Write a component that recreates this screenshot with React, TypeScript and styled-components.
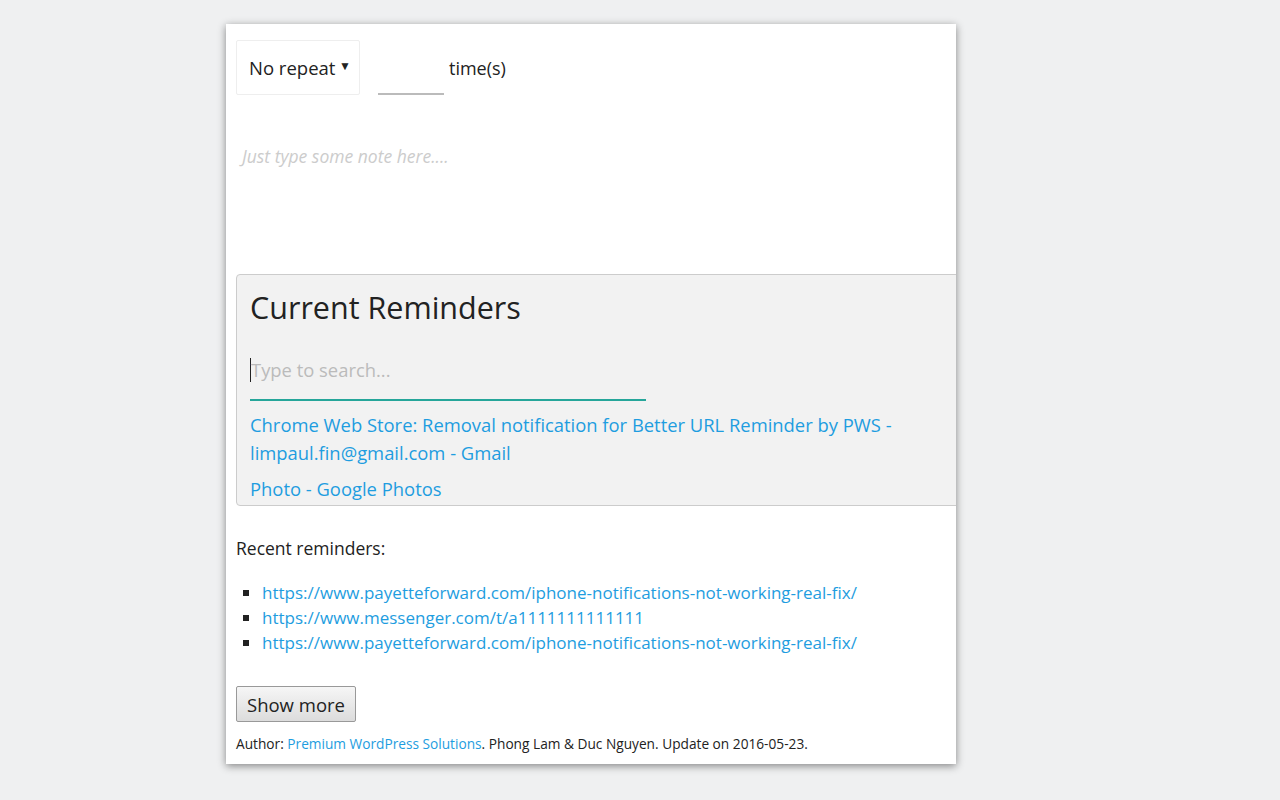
import React from 'react';
import styled, { createGlobalStyle } from 'styled-components';

const Global = createGlobalStyle`
  body { margin: 0; background: #eff0f1; font-family: "Open Sans", "Noto Sans", sans-serif; color: #222; }
`;

const Page = styled.div`
  padding: 24px 0 0 226px;
  height: 776px;
`;

const Panel = styled.div`
  width: 710px;
  height: 724px;
  padding: 16px 10px 0;
  background: #fff;
  box-shadow: 0 2px 8px rgba(0, 0, 0, 0.45);
  overflow: hidden;
`;

const RepeatRow = styled.div`
  display: flex;
  align-items: center;
  gap: 18px;
`;

const Select = styled.div`
  width: 102px;
  height: 53px;
  padding: 0 8px 0 12px;
  border: 1px solid #eee;
  border-radius: 2px;
  display: flex;
  align-items: center;
  justify-content: space-between;
  font-size: 18.5px;
  span { font-size: 12px; margin-bottom: 4px; }
`;

const Times = styled.div`
  display: flex;
  align-items: flex-end;
  gap: 5px;
  font-size: 18px;
  height: 55px;
  label { align-self: center; }
`;

const TimesInput = styled.div`
  width: 66px;
  height: 55px;
  border-bottom: 2px solid #bbb;
  box-sizing: border-box;
`;

const Note = styled.textarea`
  display: block;
  width: 740px;
  height: 128px;
  margin-top: 45px;
  padding: 4px 6px;
  box-sizing: border-box;
  border: none;
  resize: vertical;
  font: italic 17.5px "Open Sans", sans-serif;
  &::placeholder { color: #ccc; }
  outline: none;
`;

const Box = styled.div`
  width: 740px;
  height: 232px;
  box-sizing: border-box;
  margin-top: 6px;
  padding: 12px 13px;
  background: #f2f2f2;
  border: 1px solid #ccc;
  border-radius: 4px;
`;

const Title = styled.h2`
  margin: 0;
  font-size: 30.5px;
  font-weight: 400;
  line-height: 40px;
`;

const Search = styled.div`
  width: 396px;
  height: 58px;
  margin-top: 14px;
  border-bottom: 2px solid #26a69a;
  display: flex;
  align-items: center;
  font-size: 18.4px;
  color: #bbb;
  span { border-left: 1px solid #222; line-height: 24px; }
`;

const BoxLink = styled.a<{ $gap: number }>`
  display: block;
  color: #1e9de0;
  font-size: 18.4px;
  line-height: 28px;
  text-decoration: none;
  margin-top: ${(p) => p.$gap}px;
  width: 670px;
`;

const Recent = styled.div`
  margin-top: 30px;
  font-size: 17.5px;
`;

const List = styled.ul`
  margin: 20px 0 0;
  padding-left: 26px;
  list-style: square;
  li { font-size: 17px; line-height: 25px; }
  a { color: #1e9de0; text-decoration: none; }
`;

const Button = styled.button`
  margin-top: 31px;
  height: 36px;
  padding: 0 10px;
  font: 18.5px "Open Sans", sans-serif;
  color: #222;
  background: linear-gradient(#f6f6f6, #dcdcdc);
  border: 1px solid #999;
  border-radius: 2px;
`;

const Footer = styled.div`
  margin-top: 12px;
  font-size: 13.7px;
  a { color: #1e9de0; text-decoration: none; }
`;

const recent = [
  'https://www.payetteforward.com/iphone-notifications-not-working-real-fix/',
  'https://www.messenger.com/t/a1111111111111',
  'https://www.payetteforward.com/iphone-notifications-not-working-real-fix/',
];

export default function App() {
  return (
    <Page>
      <Global />
      <Panel>
        <RepeatRow>
          <Select>No repeat <span>▼</span></Select>
          <Times>
            <TimesInput />
            <label>time(s)</label>
          </Times>
        </RepeatRow>
        <Note placeholder="Just type some note here...." />
        <Box>
          <Title>Current Reminders</Title>
          <Search><span>Type to search...</span></Search>
          <BoxLink $gap={10} href="#">
            Chrome Web Store: Removal notification for Better URL Reminder by PWS - limpaul.fin@gmail.com - Gmail
          </BoxLink>
          <BoxLink $gap={8} href="#">Photo - Google Photos</BoxLink>
        </Box>
        <Recent>Recent reminders:</Recent>
        <List>
          {recent.map((u, i) => (
            <li key={i}><a href="#">{u}</a></li>
          ))}
        </List>
        <Button>Show more</Button>
        <Footer>
          Author: <a href="#">Premium WordPress Solutions</a>. Phong Lam &amp; Duc Nguyen. Update on 2016-05-23.
        </Footer>
      </Panel>
    </Page>
  );
}
